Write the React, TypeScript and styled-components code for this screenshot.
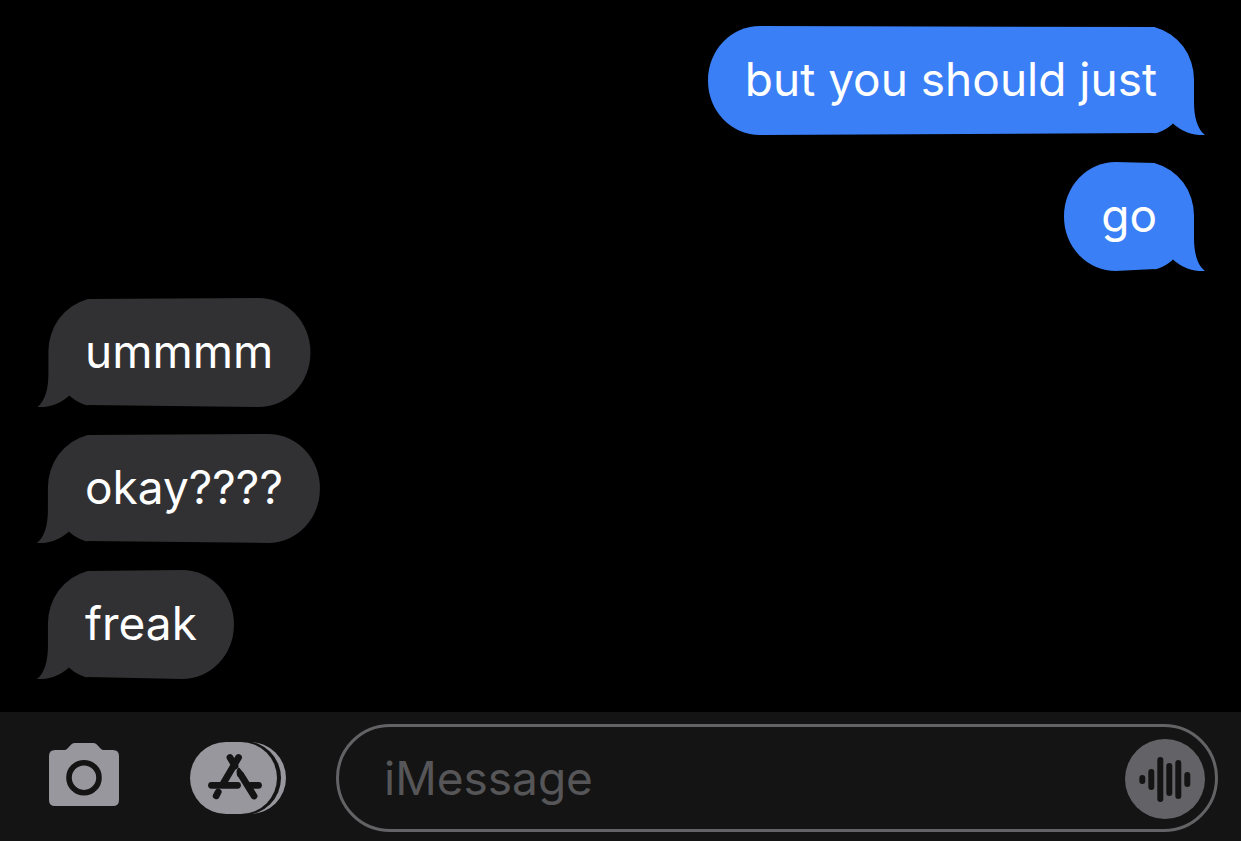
import React from "react";
import styled, { createGlobalStyle, css } from "styled-components";

const GlobalStyle = createGlobalStyle`
  *, *::before, *::after { box-sizing: border-box; }
  body {
    margin: 0;
    background: #000;
    font-family: Inter, "Liberation Sans", sans-serif;
  }
`;

type Side = "sent" | "received";

const Screen = styled.main`
  display: flex;
  flex-direction: column;
  min-height: 100vh;
  background: #000;
`;

const Thread = styled.ol`
  flex: 1;
  display: flex;
  flex-direction: column;
  gap: 27px;
  margin: 0;
  padding: 26px 36px 33px 37px;
  list-style: none;
`;

const Row = styled.li<{ $side: Side }>`
  display: flex;
  justify-content: ${(p) => (p.$side === "sent" ? "flex-end" : "flex-start")};
`;

const Bubble = styled.div<{ $side: Side }>`
  position: relative;
  isolation: isolate;
  padding: ${(p) => (p.$side === "sent" ? "23px 48px 26px 37px" : "23px 37px 26px 48px")};
  color: #fff;
  font-size: 46px;
  line-height: 60px;
  white-space: nowrap;
`;

const Shape = styled.div<{ $side: Side }>`
  position: absolute;
  inset: 0;
  z-index: -1;
  display: flex;
  color: ${(p) => (p.$side === "sent" ? "#3a7ff6" : "#313133")};
  ${(p) =>
    p.$side === "received" &&
    css`
      transform: scaleX(-1);
    `}
`;

const RoundEnd = styled.span`
  width: 52px;
  margin-right: -1px;
  border-radius: 52px 0 0 52px / 54px 0 0 54px;
  background: currentColor;
`;

const Middle = styled.span`
  flex: 1;
  background: currentColor;
  clip-path: polygon(0 0, 100% 1px, 100% calc(100% - 2px), 0 100%);
`;

const TailEnd = styled.svg`
  flex: none;
  width: 51px;
  height: 109px;
  margin-left: -1px;
  fill: currentColor;
`;

const Toolbar = styled.form`
  display: flex;
  align-items: center;
  padding: 12px 23px 9px 49px;
  background: #141414;
`;

const IconButton = styled.button<{ $gap: number }>`
  flex: none;
  display: block;
  margin: 0 ${(p) => p.$gap}px 0 0;
  padding: 0;
  border: 0;
  background: none;
  color: #98979d;
  svg {
    display: block;
  }
`;

const Field = styled.div`
  flex: 1;
  min-width: 0;
  display: flex;
  align-items: center;
  height: 108px;
  padding: 2px 10px 0 45px;
  border: 3px solid #636366;
  border-radius: 54px;
`;

const TextBox = styled.input`
  flex: 1;
  min-width: 0;
  height: 62px;
  padding: 0 0 2px;
  border: 0;
  outline: 0;
  background: none;
  color: #fff;
  font-family: inherit;
  font-size: 46px;
  line-height: 60px;
  &::placeholder {
    color: #565658;
    opacity: 1;
  }
`;

const AudioButton = styled(IconButton)`
  color: #636367;
`;

const messages: { side: Side; text: string }[] = [
  { side: "sent", text: "but you should just" },
  { side: "sent", text: "go" },
  { side: "received", text: "ummmm" },
  { side: "received", text: "okay????" },
  { side: "received", text: "freak" },
];

const bars = [
  [17, 36, 45],
  [26, 30, 51],
  [35, 18, 63],
  [44, 24, 57],
  [53, 21, 60],
  [62, 33, 48],
];

function Message({ side, text }: { side: Side; text: string }) {
  return (
    <Row $side={side}>
      <Bubble $side={side}>
        <Shape $side={side} aria-hidden="true">
          <RoundEnd />
          <Middle />
          <TailEnd viewBox="-1 0 51 109">
            <path d="M-1 1.200H0A52 54 0 0 1 39 54V76C39 90 42 103 50 109C38 110 26 105 18 97.500C13 102 7 106 0 107.300H-1Z" />
          </TailEnd>
        </Shape>
        {text}
      </Bubble>
    </Row>
  );
}

function CameraIcon() {
  return (
    <svg width="70" height="72" viewBox="0 0 70 72" aria-hidden="true">
      <path
        fill="currentColor"
        d="M6 8H15.500Q17 8 18 7L22.500 2.300Q24 1 26 1H44Q46 1 47.500 2.300L52 7Q53 8 54.500 8H64Q70 8 70 14V58Q70 64 64 64H6Q0 64 0 58V14Q0 8 6 8Z"
      />
      <circle cx="35" cy="35.700" r="15" fill="none" stroke="#141414" strokeWidth="5.600" />
    </svg>
  );
}

function AppsIcon() {
  return (
    <svg width="96" height="72" viewBox="0 0 96 72" aria-hidden="true">
      <rect x="20" width="76" height="72" rx="36" fill="currentColor" />
      <rect x="10" y="-1" width="81" height="74" rx="37" fill="#141414" />
      <rect width="87" height="72" rx="36" fill="currentColor" />
      <g stroke="#141414" strokeWidth="6.800" strokeLinecap="round" fill="none">
        <path d="M40 15.500L45 24" />
        <path d="M48.500 15.500L33.500 41" />
        <path d="M28.200 50L26.200 53.800" />
        <path d="M21.500 43.300H47.500" />
        <path d="M60 43.300H68.500" />
        <path d="M51 33L64 54" />
      </g>
      <path d="M48 26Q45 30 48 35L54 31.500L49.500 26Q48.600 25.200 48 26Z" fill="#141414" />
    </svg>
  );
}

function WaveIcon() {
  return (
    <svg width="80" height="80" viewBox="0 0 80 80" aria-hidden="true">
      <circle cx="40" cy="40" r="40" fill="currentColor" />
      {bars.map(([x, top, bottom]) => (
        <rect key={x} x={x - 2.7} y={top} width="6" height={bottom - top} rx="3" fill="#141414" />
      ))}
    </svg>
  );
}

export default function App() {
  return (
    <Screen>
      <GlobalStyle />
      <Thread>
        {messages.map((m) => (
          <Message key={m.text} side={m.side} text={m.text} />
        ))}
      </Thread>
      <Toolbar onSubmit={(e) => e.preventDefault()}>
        <IconButton type="button" aria-label="Camera" $gap={71}>
          <CameraIcon />
        </IconButton>
        <IconButton type="button" aria-label="Apps" $gap={50}>
          <AppsIcon />
        </IconButton>
        <Field>
          <TextBox type="text" aria-label="Message" placeholder="iMessage" />
          <AudioButton type="button" aria-label="Record audio" $gap={0}>
            <WaveIcon />
          </AudioButton>
        </Field>
      </Toolbar>
    </Screen>
  );
}
